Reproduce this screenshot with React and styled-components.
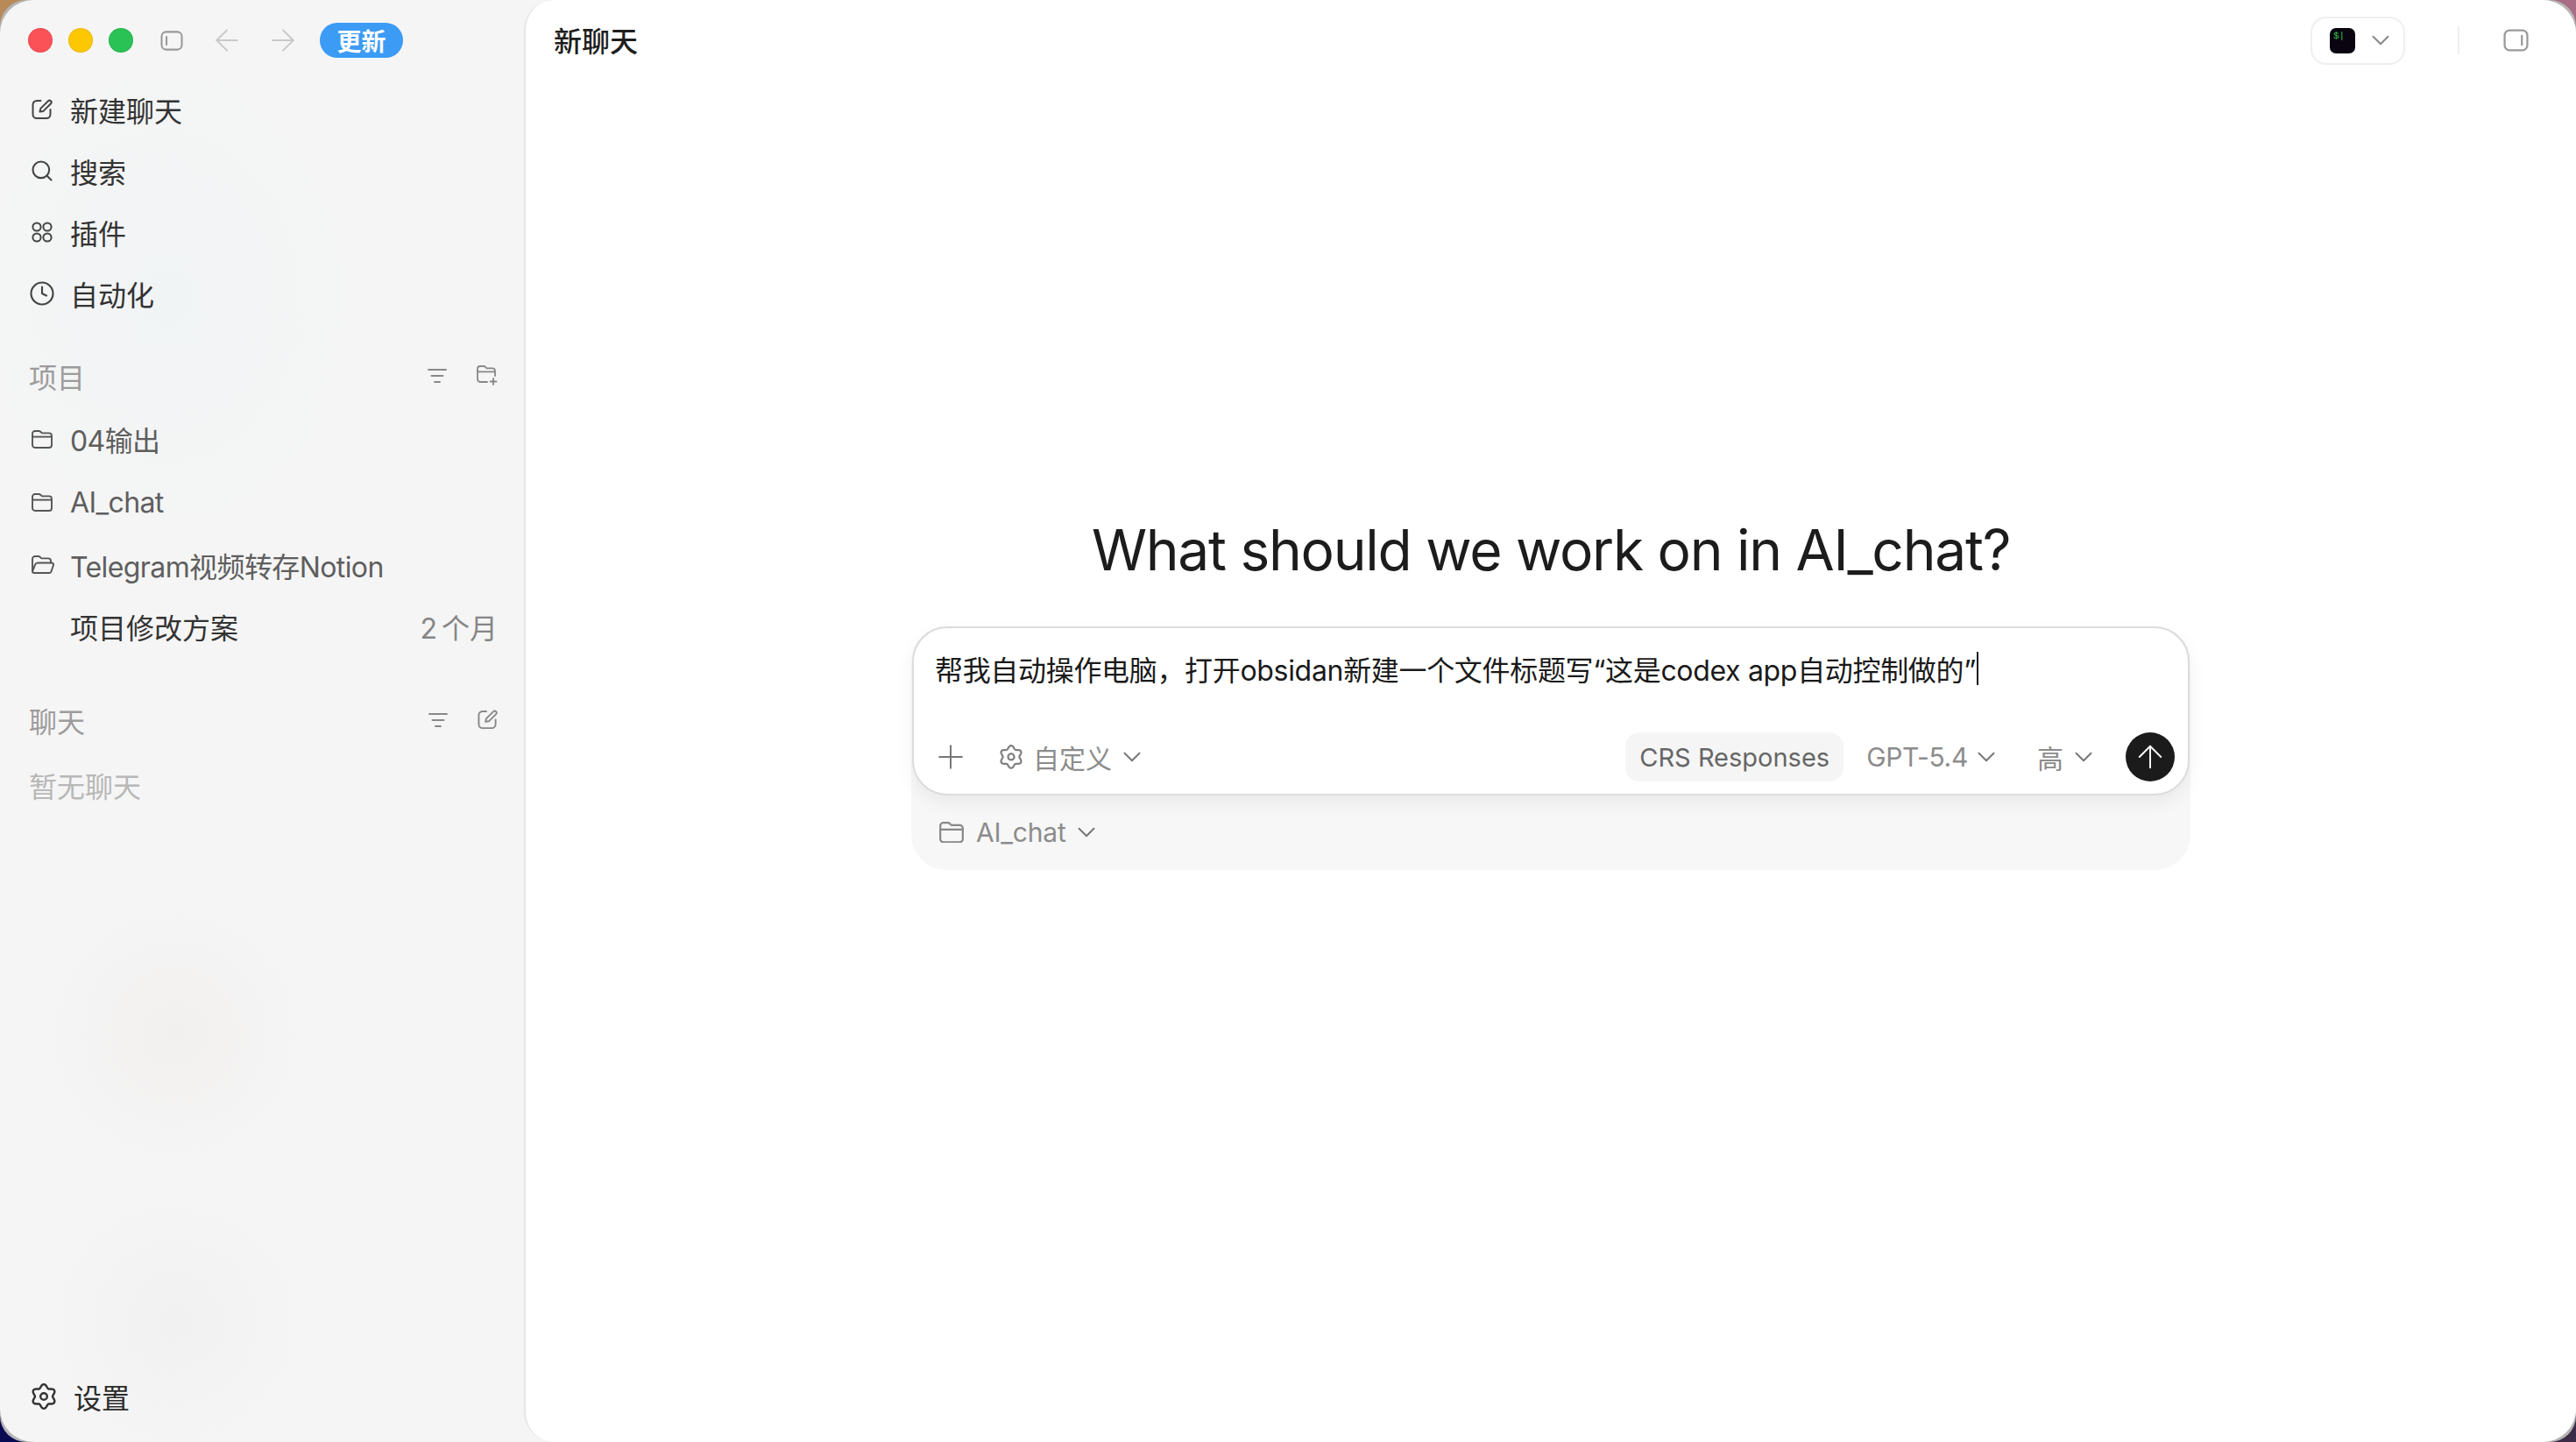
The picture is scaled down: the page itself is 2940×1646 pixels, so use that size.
import React from "react";
import styled, { createGlobalStyle } from "styled-components";
import { ArrowLeft, ArrowRight, ArrowUp, ChevronDown, Clock, Plus, Search } from "lucide-react";

const sans = `"Inter", "Noto Sans CJK SC", sans-serif`;

const GlobalStyle = createGlobalStyle`
  html, body {
    margin: 0;
    padding: 0;
    background: #fff;
  }
  body {
    font-family: ${sans};
    -webkit-font-smoothing: antialiased;
  }
`;

// six soft lobes, the same gear is used in the composer and in the footer
function flowerPath(radius, depth, cx, cy) {
  const points = [];
  for (let i = 0; i <= 72; i++) {
    const a = (i / 72) * Math.PI * 2 - Math.PI / 2;
    const r = radius + depth * Math.cos(6 * (a + Math.PI / 2));
    points.push(`${(cx + r * Math.cos(a)).toFixed(2)} ${(cy + r * Math.sin(a)).toFixed(2)}`);
  }
  return `M${points.join("L")}Z`;
}

const Gear = ({ size = 28, color = "#333" }) => (
  <svg width={size} height={size * 1.07} viewBox="0 0 28 30" fill="none" stroke={color} strokeWidth="2.4">
    <path d={flowerPath(12, 1.9, 14, 15)} strokeLinejoin="round" />
    <circle cx="14" cy="15" r="3.8" />
  </svg>
);

const FolderIcon = ({ width = 24, color = "#555" }) => (
  <svg width={width} height={width * 0.875} viewBox="0 0 24 21" fill="none" stroke={color} strokeWidth="1.9" strokeLinejoin="round">
    <path d="M1 4a3 3 0 0 1 3-3h4.2a3 3 0 0 1 2 .8L12 3.4h8a3 3 0 0 1 3 3V17a3 3 0 0 1-3 3H4a3 3 0 0 1-3-3z" />
    <path d="M1 7.6h22" />
  </svg>
);

const OpenFolderIcon = () => (
  <svg width="27" height="22" viewBox="0 0 27 22" fill="none" stroke="#555" strokeWidth="1.9" strokeLinejoin="round" strokeLinecap="round">
    <path d="M2 18V4a3 3 0 0 1 3-3h3.6a3 3 0 0 1 2 .8L12.4 3.4H20a3 3 0 0 1 3 3v2" />
    <path d="M2 18.4 5.2 10.4a3 3 0 0 1 2.8-1.9h16a2 2 0 0 1 1.9 2.7l-2.4 7.2a2.6 2.6 0 0 1-2.5 1.6H4a2 2 0 0 1-2-2z" />
  </svg>
);

const NewFolderIcon = () => (
  <svg width="24" height="23" viewBox="0 0 24 23" fill="none" stroke="#888" strokeWidth="1.8" strokeLinecap="round" strokeLinejoin="round">
    <path d="M12 19H4a3 3 0 0 1-3-3V4a3 3 0 0 1 3-3h4a3 3 0 0 1 2 .8L11.6 3.4H18a3 3 0 0 1 3 3V12" />
    <path d="M1 7.4h20" />
    <path d="M19 15v7M15.5 18.5h7" />
  </svg>
);

const FilterIcon = () => (
  <svg width="22" height="18" viewBox="0 0 22 18" fill="none" stroke="#888" strokeWidth="1.9" strokeLinecap="round">
    <path d="M1 2h20M4.5 9h13M8 16h6" />
  </svg>
);

const PenIcon = ({ size = 24, color = "#444" }) => (
  <svg width={size} height={size} viewBox="0 0 24 24" fill="none" stroke={color} strokeWidth="2" strokeLinecap="round" strokeLinejoin="round">
    <path d="M10.5 2H6A4.5 4.5 0 0 0 1.5 6.5v11A4.5 4.5 0 0 0 6 22h11a4.5 4.5 0 0 0 4.5-4.5V12" />
    <path d="M9.5 14.5l.8-3.6L19 2.2a2.2 2.2 0 0 1 3.1 3.1l-8.7 8.6z" />
  </svg>
);

const PluginsIcon = () => (
  <svg width="24" height="24" viewBox="0 0 24 24" fill="none" stroke="#444" strokeWidth="2">
    <circle cx="6" cy="6" r="4.6" />
    <circle cx="18" cy="6" r="4.6" />
    <circle cx="6" cy="18" r="4.6" />
    <circle cx="18" cy="18" r="4.6" />
  </svg>
);

const PanelIcon = ({ side = "left", width = 26, height = 23 }) => (
  <svg width={width} height={height} viewBox="0 0 28 25" fill="none" stroke="#999" strokeWidth="2.2" strokeLinecap="round">
    <rect x="1.5" y="1.5" width="25" height="22" rx="5.5" />
    {side === "left" ? <path d="M7.5 7.5v10" /> : <path d="M20.5 7.5v10" />}
  </svg>
);

const Chevron = styled(ChevronDown).attrs({ size: 34, strokeWidth: 1.4 })`
  margin: 0 -8px;
  flex-shrink: 0;
`;

const Wallpaper = styled.div`
  width: 2940px;
  height: 1646px;
  background:
    linear-gradient(135deg, #b88a58 0 2%, transparent 2%),
    linear-gradient(225deg, #a86c84 0 2%, transparent 2%),
    linear-gradient(45deg, #0a0a52 0 2%, transparent 2%),
    linear-gradient(315deg, #3b2c48 0 2%, transparent 2%),
    #777;
`;

// grey sliver seen only in the rounded corners of the window
const WindowEdge = styled.div`
  width: 100%;
  height: 100%;
  border-radius: 30px;
  overflow: hidden;
  background: #b5b5b5;
`;

const Window = styled.div`
  display: flex;
  width: 100%;
  height: 100%;
  border-radius: 38px;
  overflow: hidden;
  background:
    radial-gradient(circle 150px at 200px 1180px, #f2f0ef 0, rgba(242, 240, 239, 0) 100%),
    radial-gradient(circle 150px at 200px 1510px, #f1f1f1 0, rgba(241, 241, 241, 0) 100%),
    radial-gradient(ellipse 240px 300px at 190px 340px, #f1f4f5 0, rgba(241, 244, 245, 0) 100%),
    #f5f5f5;
`;

const Sidebar = styled.aside`
  display: flex;
  flex-direction: column;
  flex: 0 0 598px;
  width: 598px;
  height: 100%;
  padding-bottom: 15px;
  box-sizing: border-box;
`;

const TitleBar = styled.div`
  display: flex;
  align-items: center;
  height: 92px;
  padding-left: 32px;
  flex-shrink: 0;
`;

const Light = styled.span`
  width: 28px;
  height: 28px;
  border-radius: 50%;
  background: ${p => p.color};
  box-shadow: inset 0 0 0 1px rgba(0, 0, 0, 0.08);
  margin-right: 18px;
`;

const ToolSlot = styled.span`
  display: flex;
  align-items: center;
  margin-left: ${p => p.offset}px;
  color: #c9c9c9;
`;

const UpdatePill = styled.span`
  display: flex;
  align-items: center;
  justify-content: center;
  width: 95px;
  height: 40px;
  margin-left: 22px;
  border-radius: 20px;
  background: #3b9bf5;
  color: #fff;
  font-size: 28px;
  font-weight: 700;
`;

const NavRow = styled.div`
  display: flex;
  align-items: center;
  height: ${p => p.height || 70}px;
  padding: 0 30px 4px 36px;
  box-sizing: border-box;
  font-size: 32px;
  color: ${p => p.color || "#333"};
  flex-shrink: 0;
`;

const ProjectRow = styled(NavRow)`
  color: #5e5e5e;
  letter-spacing: -0.6px;
`;

const ProjectList = styled.div`
  margin-top: 6px;
`;

const IconSlot = styled.span`
  display: flex;
  align-items: center;
  justify-content: center;
  width: 24px;
  margin-right: 20px;
  flex-shrink: 0;

  svg {
    flex-shrink: 0;
  }
`;

const SectionHead = styled.div`
  display: flex;
  align-items: center;
  height: 60px;
  margin-top: ${p => p.top}px;
  padding: 0 30px 5px 33px;
  box-sizing: border-box;
  font-size: 32px;
  color: #9c9c9c;
  flex-shrink: 0;
`;

const SectionActions = styled.span`
  display: flex;
  align-items: center;
  gap: 34px;
  margin-left: auto;
`;

const Age = styled.span`
  margin-left: auto;
  color: #858585;
  word-spacing: -4px;
`;

const EmptyNote = styled.div`
  height: 60px;
  line-height: 58px;
  margin-top: 16px;
  padding-left: 33px;
  font-size: 32px;
  color: #b8b8b8;
`;

const SettingsRow = styled(NavRow)`
  margin-top: auto;
  color: #2b2b2b;
`;

const SettingsSlot = styled(IconSlot)`
  width: 28px;
`;

const Main = styled.main`
  display: flex;
  flex-direction: column;
  flex: 1;
  min-width: 0;
  background: #fff;
  border-left: 2px solid #e6e6e6;
  border-radius: 34px 0 0 34px;
  box-sizing: border-box;
`;

const MainHeader = styled.header`
  display: flex;
  align-items: center;
  height: 92px;
  padding: 0 54px 0 32px;
  flex-shrink: 0;
`;

const ChatTitle = styled.div`
  margin-bottom: 3px;
  font-size: 32px;
  font-weight: 500;
  color: #1f1f1f;
`;

const AppPicker = styled.div`
  display: flex;
  align-items: center;
  gap: 20px;
  height: 55px;
  width: 108px;
  margin-left: auto;
  padding-left: 20px;
  box-sizing: border-box;
  border: 2px solid #efefef;
  border-radius: 18px;
  color: #888;
`;

const TerminalIcon = styled.span`
  display: block;
  width: 29px;
  height: 29px;
  padding: 3px 0 0 4px;
  box-sizing: border-box;
  border-radius: 7px;
  background: #0a0410;
  color: #35c04a;
  font-family: "Liberation Mono", monospace;
  font-size: 11px;
  line-height: 12px;
`;

const HeaderDivider = styled.span`
  width: 2px;
  height: 32px;
  margin: 0 50px 0 60px;
  background: #efefef;
`;

const Stage = styled.div`
  display: flex;
  flex-direction: column;
  align-items: center;
  flex: 1;
  padding-top: 496px;
`;

const Hero = styled.h1`
  margin: 0 0 47px;
  font-size: 64px;
  line-height: 80px;
  font-weight: 400;
  color: #1c1c1c;
  letter-spacing: -1.25px;
`;

const ComposerTray = styled.div`
  width: 1460px;
  height: 278px;
  border-radius: 40px;
  background: #f7f7f7;
`;

const Composer = styled.div`
  height: 193px;
  margin: 0 1px;
  box-sizing: border-box;
  background: #fff;
  border: 2px solid #dcdcdc;
  border-radius: 40px;
  box-shadow: 0 8px 20px rgba(0, 0, 0, 0.06);
`;

const Prompt = styled.div`
  display: flex;
  align-items: center;
  height: 50px;
  margin-top: 21px;
  padding-left: 24px;
  font-size: 32px;
  color: #1a1a1a;
  letter-spacing: -0.32px;
  white-space: nowrap;
`;

const Caret = styled.span`
  width: 2px;
  height: 38px;
  margin-left: 1px;
  background: #1a1a1a;
`;

const ComposerBar = styled.div`
  display: flex;
  align-items: center;
  height: 56px;
  margin-top: 48px;
  padding: 0 15px 0 20px;
`;

const Control = styled.span`
  display: flex;
  align-items: center;
  gap: ${p => p.gap || 14}px;
  margin-left: ${p => p.offset || 0}px;
  font-size: 30px;
  color: #8c8c8c;
`;

const ModelControl = styled(Control)`
  letter-spacing: -0.3px;
`;

const GearSlot = styled.span`
  display: flex;
  margin-right: -2px;
`;

const ProviderChip = styled.span`
  display: flex;
  align-items: center;
  height: 56px;
  margin-left: auto;
  padding: 0 16px;
  border-radius: 16px;
  background: #f5f5f5;
  font-size: 29px;
  color: #666;
`;

const SendButton = styled.span`
  display: flex;
  align-items: center;
  justify-content: center;
  width: 56px;
  height: 56px;
  margin-left: 39px;
  border-radius: 50%;
  background: #1b1b1b;
  color: #fff;
`;

const TrayRow = styled.div`
  display: flex;
  align-items: center;
  gap: 14px;
  height: 84px;
  padding-left: 32px;
  font-size: 30px;
  color: #8c8c8c;
  letter-spacing: -0.2px;
`;

const projects = [
  { name: "04输出", icon: <FolderIcon /> },
  { name: "AI_chat", icon: <FolderIcon /> },
  { name: "Telegram视频转存Notion", icon: <OpenFolderIcon /> }
];

const navItems = [
  { name: "新建聊天", icon: <PenIcon /> },
  { name: "搜索", icon: <Search size={28} strokeWidth={1.8} color="#444" /> },
  { name: "插件", icon: <PluginsIcon /> },
  { name: "自动化", icon: <Clock size={30} strokeWidth={1.7} color="#444" /> }
];

export default function App() {
  return (
    <Wallpaper>
      <GlobalStyle />
      <WindowEdge>
        <Window>
          <Sidebar>
            <TitleBar>
              <Light color="#fb5257" />
              <Light color="#fdc701" />
              <Light color="#2ac255" />
              <ToolSlot offset={13}>
                <PanelIcon />
              </ToolSlot>
              <ToolSlot offset={30}>
                <ArrowLeft size={40} strokeWidth={1.2} />
              </ToolSlot>
              <ToolSlot offset={24}>
                <ArrowRight size={40} strokeWidth={1.2} />
              </ToolSlot>
              <UpdatePill>更新</UpdatePill>
            </TitleBar>

            {navItems.map(item => (
              <NavRow key={item.name}>
                <IconSlot>{item.icon}</IconSlot>
                {item.name}
              </NavRow>
            ))}

            <SectionHead top={29}>
              项目
              <SectionActions>
                <FilterIcon />
                <NewFolderIcon />
              </SectionActions>
            </SectionHead>
            <ProjectList>
              {projects.map(project => (
                <ProjectRow key={project.name} height={72}>
                  <IconSlot>{project.icon}</IconSlot>
                  {project.name}
                </ProjectRow>
              ))}
              <NavRow height={68}>
                <IconSlot />
                项目修改方案
                <Age>2 个月</Age>
              </NavRow>
            </ProjectList>

            <SectionHead top={43}>
              聊天
              <SectionActions>
                <FilterIcon />
                <PenIcon size={23} color="#888" />
              </SectionActions>
            </SectionHead>
            <EmptyNote>暂无聊天</EmptyNote>

            <SettingsRow>
              <SettingsSlot>
                <Gear />
              </SettingsSlot>
              设置
            </SettingsRow>
          </Sidebar>

          <Main>
            <MainHeader>
              <ChatTitle>新聊天</ChatTitle>
              <AppPicker>
                <TerminalIcon>$|</TerminalIcon>
                <Chevron />
              </AppPicker>
              <HeaderDivider />
              <PanelIcon side="right" width={29} height={26} />
            </MainHeader>

            <Stage>
              <Hero>What should we work on in AI_chat?</Hero>
              <ComposerTray>
                <Composer>
                  <Prompt>
                    帮我自动操作电脑，打开obsidan新建一个文件标题写“这是codex app自动控制做的”
                    <Caret />
                  </Prompt>
                  <ComposerBar>
                    <Plus size={44} strokeWidth={1.1} color="#777" />
                    <Control offset={34}>
                      <GearSlot>
                        <Gear size={26} color="#808080" />
                      </GearSlot>
                      自定义
                      <Chevron color="#777" />
                    </Control>
                    <ProviderChip>CRS Responses</ProviderChip>
                    <ModelControl offset={26} gap={12}>
                      GPT-5.4
                      <Chevron color="#777" />
                    </ModelControl>
                    <Control offset={49}>
                      高
                      <Chevron color="#777" />
                    </Control>
                    <SendButton>
                      <ArrowUp size={42} strokeWidth={1.1} />
                    </SendButton>
                  </ComposerBar>
                </Composer>
                <TrayRow>
                  <FolderIcon width={28} color="#888" />
                  AI_chat
                  <Chevron color="#777" />
                </TrayRow>
              </ComposerTray>
            </Stage>
          </Main>
        </Window>
      </WindowEdge>
    </Wallpaper>
  );
}
